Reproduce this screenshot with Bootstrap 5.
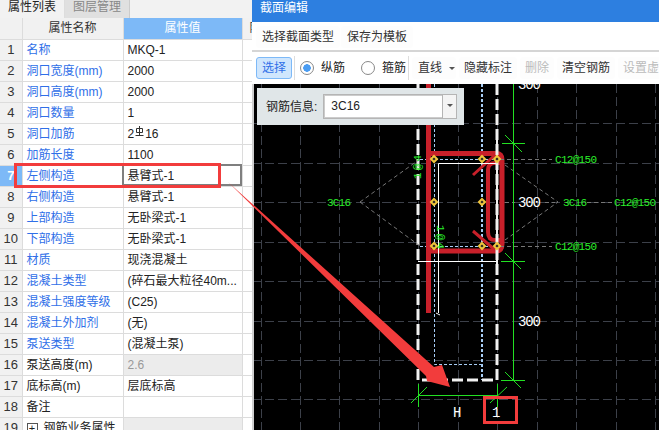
<!DOCTYPE html>
<html lang="en">
<head>
  <meta charset="UTF-8" />
  <title>截面编辑</title>
  <link href="https://cdn.jsdelivr.net/npm/bootstrap@5.3.2/dist/css/bootstrap.min.css" rel="stylesheet">
  <style>
    html, body { height: 100%; }
    body {
      width: 659px; height: 430px; overflow: hidden; position: relative;
      background: #fff; color: #222;
      font: 12px/1 "Liberation Sans", "Noto Sans CJK SC", sans-serif;
    }
    .left-pane { width: 252px; flex: none; background: #fff; }
    .tab-strip { height: 18px; background: #f2f2f2; }
    .tab-item { height: 18px; padding: 0 8px; line-height: 15px; font-size: 12px; }
    .tab-on { background: #f2f2f2; border-right: 1px solid #ddd; color: #222; }
    .tab-off { background: #e0e0e0; color: #888; border-right: 1px solid #ccc; }
    .prop-grid { table-layout: fixed; width: 252px; border-collapse: collapse; }
    .prop-grid td, .prop-grid th {
      height: 21px; padding: 0 4px; border: 1px solid #dcdcdc; font-weight: 400;
      white-space: nowrap; overflow: hidden; font-size: 12px;
    }
    .prop-grid tr:first-child th { border-top: 0; }
    .prop-grid td:first-child, .prop-grid th:first-child { border-left: 0; }
    .prop-grid td:last-child, .prop-grid th:last-child { border-right: 0; }
    .prop-grid td.idx-cell, .prop-grid th.idx-cell { background: #f1f1f1; text-align: center; padding: 0; color: #333; font-size: 13px; }
    .prop-grid td.idx-on { background: #7db9f7; color: #fff; font-weight: 700; }
    .head-cell { background: #f1f1f1; text-align: center; color: #333; }
    .prop-grid th.head-tail { padding: 0 0 0 7px; text-align: left; }
    .head-on { background: #7db9f7; color: #fff; text-align: center; }
    .name-link { color: #2f6fe8; }
    .val-off { background: #ececec; color: #999; }
    .rebar-sym { position: relative; top: -3px; margin: 0 1px; }
    .plus-box {
      display: inline-block; width: 11px; height: 11px; border: 1px solid #555; line-height: 9px;
      text-align: center; font-size: 11px; margin-right: 6px;
    }
    .right-pane { flex: 1; min-width: 0; background: #fff; }
    .title-bar { height: 22px; background: #2d7fe0; color: #fff; padding: 0 8px; line-height: 17px; }
    .tool-one { height: 28px; padding: 4px 0 2px 4px; gap: 1px; }
    .tool-one .tool-btn { padding: 0 6px; }
    .tool-gap { height: 2px; background: #d5d5d5; }
    .tool-two { height: 32px; padding-left: 4px; overflow: hidden; white-space: nowrap; }
    .tool-btn { flex: none; padding: 0 5px; height: 22px; line-height: 22px; color: #333; background: #fdfdfd; border-radius: 3px; margin-right: 3px; }
    .tool-two .btn-line { padding: 0 1px 0 6px; }
    .tool-on { flex: none; background: #cfe6fd; border: 1px solid #7db9f7; color: #2f6fe8; height: 22px; line-height: 20px; padding: 0 5px; border-radius: 3px; }
    .tool-dim { color: #bbb; }
    .tool-sep { flex: none; width: 1px; height: 24px; background: #ddd; margin: 0 3px 0 2px; }
    .radio-dot { flex: none; width: 14px; height: 14px; border: 1px solid #888; border-radius: 50%; margin-right: 7px; background: #fff; }
    .radio-on { background: radial-gradient(circle, #4a9cf2 0 3.5px, #fff 4px); margin-left: 2px; }
    .radio-label { margin-right: 16px; }
    .radio-last { margin-right: 0; }
    .caret-down { flex: none; width: 0; height: 0; border: 3px solid transparent; border-top: 3px solid #555; margin-left: 7px; margin-top: 3px; }
    .draw-area { height: 346px; background: #000; position: relative; }
    .draw-area svg { position: absolute; left: 0; top: 0; }
    .rebar-info {
      position: absolute; left: 5px; top: 4px; width: 207px; height: 37px; background: #e0e6e8;
      padding: 0 7px 0 9px; z-index: 2;
    }
    .rebar-field { flex: 1; height: 25px; border: 1px solid #b5b5b5; margin-left: 6px; background: #fff; box-shadow: inset 0 0 0 1px #ccc; }
    .rebar-val { flex: 1; padding-left: 7px; line-height: 23px; }
    .rebar-drop { width: 14px; border-left: 1px solid #b5b5b5; background: #f4f4f4; padding-top: 9px; }
    .note-layer { position: absolute; left: 0; top: 0; z-index: 5; pointer-events: none; }
    .cad { font-family: "Liberation Mono", monospace; }
  </style>
</head>
<body>
  <div class="d-flex h-100">
    <div class="left-pane">
      <div class="tab-strip d-flex">
        <div class="tab-item tab-on">属性列表</div>
        <div class="tab-item tab-off">图层管理</div>
      </div>
      <table class="prop-grid">
        <colgroup><col style="width:22px"><col style="width:101px"><col style="width:119px"><col style="width:10px"></colgroup>
        <tbody id="rows">
          <tr><th class="idx-cell"></th><th class="head-cell">属性名称</th><th class="head-on">属性值</th><th class="head-cell head-tail">附</th></tr>
        </tbody>
      </table>
    </div>
    <div class="right-pane">
      <div class="title-bar">截面编辑</div>
      <div class="tool-one d-flex">
        <div class="tool-btn m-0">选择截面类型</div>
        <div class="tool-btn m-0">保存为模板</div>
      </div>
      <div class="tool-gap"></div>
      <div class="tool-two d-flex align-items-center">
        <div class="tool-on">选择</div>
        <div class="tool-sep"></div>
        <span class="radio-dot radio-on"></span><span class="radio-label">纵筋</span>
        <span class="radio-dot"></span><span class="radio-label radio-last">箍筋</span>
        <div class="tool-sep"></div>
        <div class="tool-btn btn-line d-flex align-items-center">直线<span class="caret-down"></span></div>
        <div class="tool-btn">隐藏标注</div>
        <div class="tool-btn tool-dim">删除</div>
        <div class="tool-btn">清空钢筋</div>
        <div class="tool-btn tool-dim">设置虚</div>
      </div>
      <div class="draw-area">
        <div class="rebar-info d-flex align-items-center">
          <span>钢筋信息:</span>
          <div class="rebar-field d-flex">
            <div class="rebar-val">3C16</div>
            <div class="rebar-drop"><div class="caret-down m-0 ms-1"></div></div>
          </div>
        </div>
        <!-- canvas uses page coordinates, same as the reference -->
        <svg width="407" height="346" viewBox="252 84 407 346">
          <g stroke="#3c4049" stroke-width="1" stroke-dasharray="9 4" fill="none">
            <path d="M252 123.500H659M252 163.500H659M252 202.500H659M252 242.500H659M252 281.500H659M252 321.500H659M252 360.500H659M252 399.500H659"/>
            <path d="M261.500 84V430M300.500 84V430M339.500 84V430M379.500 84V430M418.500 84V430M458.500 84V430M497.500 84V430M537.500 84V430M576.500 84V430M616.500 84V430M655.500 84V430"/>
          </g>
          <rect x="252" y="84" width="2" height="346" fill="#cfcfcf"/>
          <g stroke="#a8cdf5" fill="none" stroke-dasharray="3 2">
            <path d="M434.500 84V364.500H482"/>
            <path d="M482 84V380" stroke-width="2"/>
            <path d="M420 159.500H497M420 246.500H497"/>
          </g>
          <g stroke="#c8202a" fill="none" stroke-width="5">
            <path d="M428.500 84V313"/>
            <path d="M428 153.500H496Q502 153.500 502 160V244Q502 251 496 251H428"/>
            <path d="M500 163H495Q488 163 488 170V232Q488 240 495 240H502" stroke-width="4"/>
            <path d="M473 175L495 155M473 231L495 250" stroke-width="3"/>
          </g>
          <path d="M438.500 313V163.500H497M418 261.500H497" stroke="#fff" fill="none"/>
          <path d="M436 313l4 2" stroke="#fff" fill="none"/>
          <path d="M418 84V380H497V84" stroke="#f2f2f2" stroke-width="3" stroke-dasharray="11 4" fill="none"/>
          <path d="M497 134V265" stroke="#f2f2f2" stroke-width="2" fill="none"/>
          <g stroke="#777" fill="none" stroke-dasharray="4 3">
            <path d="M500 159.500H552M500 246.500H552M505 202.500H515M545 202.500H555M587 202.500H613"/>
            <path d="M360 202L420 159M360 202L420 246M505 165L558 202L505 240"/>
          </g>
          <g fill="#222" stroke="#f0c53c" stroke-width="2">
            <path d="M434 156l3 3-3 3-3-3z"/><path d="M482 156l3 3-3 3-3-3z"/><path d="M497 156l3 3-3 3-3-3z"/>
            <path d="M434 199l3 3-3 3-3-3z"/><path d="M482 199l3 3-3 3-3-3z"/>
            <path d="M434 243l3 3-3 3-3-3z"/><path d="M482 243l3 3-3 3-3-3z"/><path d="M497 243l3 3-3 3-3-3z"/>
          </g>
          <g stroke="#22e022" fill="none">
            <path d="M513.500 84V380"/>
            <path d="M502 143.500H525M505 135L522 152M501 261.500H525M505 253L521 269M501 380.500H525M505 372L521 388"/>
            <path d="M418 395.500H497M418.500 384V407M497.500 384V407M411 403L427 387M490 403L507 387"/>
          </g>
          <g class="cad" fill="#2bf02b" font-size="11">
            <text x="555" y="163" textLength="42">C12@150</text>
            <text x="555" y="250" textLength="42">C12@150</text>
            <text x="327" y="206" textLength="24">3C16</text>
            <text x="563" y="206" textLength="24">3C16</text>
            <text x="614" y="206" textLength="42">C12@150</text>
            <text transform="translate(421 179) rotate(-90)" textLength="24">1@4</text>
            <text transform="translate(437 225) rotate(90)" textLength="24">1@4</text>
          </g>
          <g class="cad" fill="#fff" font-size="14">
            <text x="518" y="89" textLength="23">300</text>
            <text x="518" y="207" textLength="23">300</text>
            <text x="518" y="326" textLength="23">300</text>
            <text x="453" y="417">H</text>
            <text x="492" y="417">1</text>
          </g>
        </svg>
      </div>
    </div>
  </div>
  <!-- red marks drawn over both panes -->
  <svg class="note-layer" width="659" height="430" viewBox="0 0 659 430">
    <rect x="123" y="165" width="118" height="20" fill="none" stroke="#7f7f7f" stroke-width="2"/>
    <rect x="15.500" y="164.500" width="204" height="22" fill="none" stroke="#f23c3c" stroke-width="3"/>
    <path d="M228 182L434 367L442 365L450 387L427 381L426 376Z" fill="#f23c3c"/>
    <rect x="484.500" y="397.500" width="32" height="25" fill="none" stroke="#f23c3c" stroke-width="3"/>
  </svg>
  <script>
    const sym = '<svg class="rebar-sym" width="9" height="10" viewBox="0 0 9 10" fill="none" stroke="#333"><path d="M4.500 0V9M1.500 2.500H7.500V6.500H1.500ZM.5 9.500H8.500"/></svg>';
    const data = [
      ["名称", "MKQ-1", 1], ["洞口宽度(mm)", "2000", 1], ["洞口高度(mm)", "2000", 1], ["洞口数量", "1", 1],
      ["洞口加筋", "2" + sym + "16", 1], ["加筋长度", "1100", 1], ["左侧构造", "悬臂式-1", 1],
      ["右侧构造", "悬臂式-1", 1], ["上部构造", "无卧梁式-1", 1], ["下部构造", "无卧梁式-1", 1],
      ["材质", "现浇混凝土", 1], ["混凝土类型", "(碎石最大粒径40m...", 1], ["混凝土强度等级", "(C25)", 1],
      ["混凝土外加剂", "(无)", 1], ["泵送类型", "(混凝土泵)", 1], ["泵送高度(m)", "2.6", 0],
      ["底标高(m)", "层底标高", 0], ["备注", "", 0]
    ];
    let html = "";
    data.forEach((d, i) => {
      const idx = i === 6 ? "idx-cell idx-on" : "idx-cell";
      const val = i === 15 ? "val-off" : "";
      html += `<tr><td class="${idx}">${i + 1}</td><td class="${d[2] ? "name-link" : ""}">${d[0]}</td><td class="${val}">${d[1]}</td><td></td></tr>`;
    });
    html += `<tr><td class="idx-cell">19</td><td><span class="plus-box">+</span>钢筋业务属性</td><td class="val-off"></td><td></td></tr>`;
    document.getElementById("rows").insertAdjacentHTML("beforeend", html);
  </script>
  <script src="https://cdn.jsdelivr.net/npm/bootstrap@5.3.2/dist/js/bootstrap.bundle.min.js"></script>
</body>
</html>
